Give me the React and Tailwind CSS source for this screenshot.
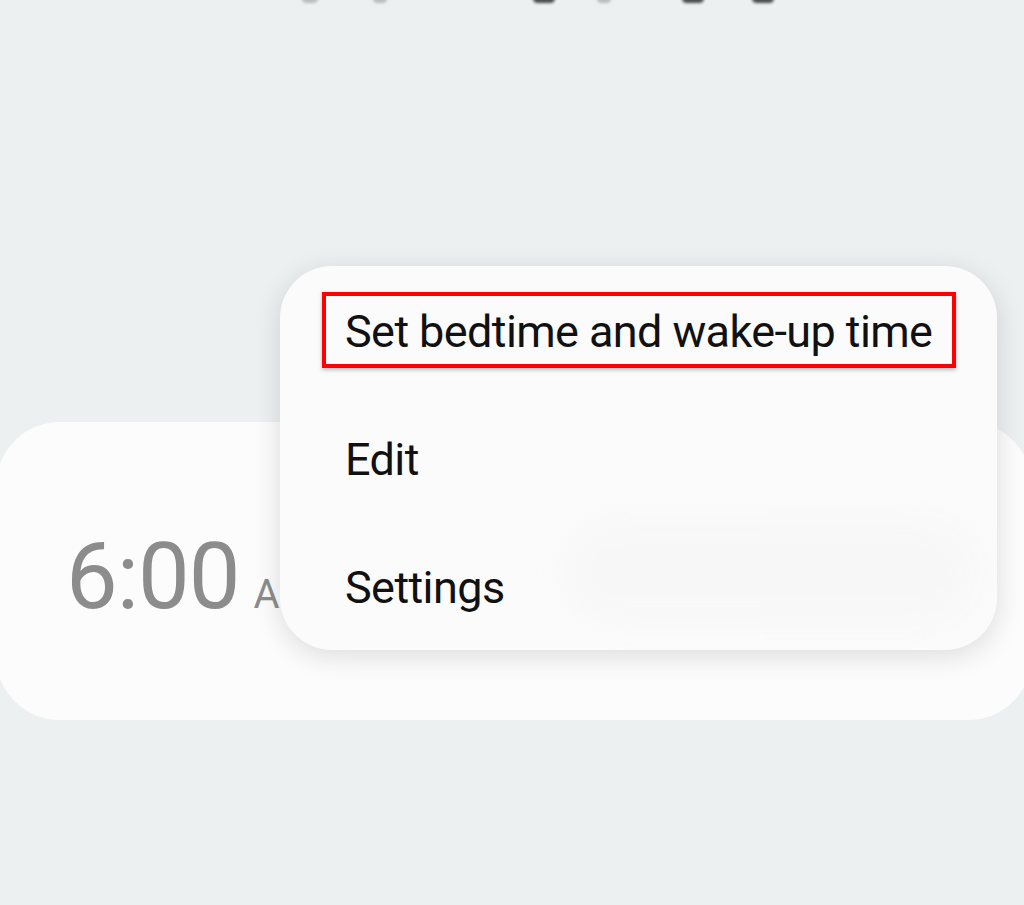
export default function App() {
  const blobs = [
    { x: 302, w: 16, o: 'opacity-25' },
    { x: 373, w: 14, o: 'opacity-25' },
    { x: 533, w: 22, o: 'opacity-80' },
    { x: 597, w: 14, o: 'opacity-25' },
    { x: 682, w: 22, o: 'opacity-80' },
    { x: 752, w: 22, o: 'opacity-80' },
  ];
  return (
    <div className="relative w-[1024px] h-[905px] overflow-hidden bg-[#ecf0f1]" style={{ fontFamily: 'Roboto, "Noto Sans", sans-serif' }}>
      {blobs.map((b, i) => (
        <div
          key={i}
          className={`absolute top-[-6px] h-[9px] rounded-full bg-[#222] blur-[1.5px] ${b.o}`}
          style={{ left: b.x, width: b.w }}
        />
      ))}
      <div className="pt-[422px]">
        <div className="ml-[-4px] w-[1036px] h-[298px] rounded-[64px] bg-[#fcfcfc] flex items-center pl-[70px]">
          <div className="flex items-baseline text-[#8c8c8c] mt-[12px]">
            <span className="text-[92px] leading-none tracking-[-1px]">6:00</span>
            <span className="text-[40px] leading-none ml-[14px]">AM</span>
          </div>
        </div>
      </div>
      <div className="absolute left-[280px] top-[266px] w-[717px] h-[384px] rounded-[52px] bg-[#fbfbfb] shadow-[0_6px_28px_rgba(0,0,0,0.13)] overflow-hidden">
        <div className="absolute left-[280px] top-[250px] w-[420px] h-[110px] rounded-full bg-[#f6f6f6] blur-[12px] opacity-60" />
        <div className="relative flex flex-col">
          <div className="h-[128px] flex items-center pl-[65px] pt-[4px] text-[45px] text-[#111] tracking-[-0.6px]">Set bedtime and wake-up time</div>
          <div className="h-[128px] flex items-center pl-[65px] pt-[4px] text-[45px] text-[#111] tracking-[-0.6px]">Edit</div>
          <div className="h-[128px] flex items-center pl-[65px] pt-[4px] text-[45px] text-[#111] tracking-[-0.6px]">Settings</div>
        </div>
        <div className="absolute left-[42px] top-[26px] w-[634px] h-[76px] border-[4px] border-[#ff0000] shadow-[0_2px_4px_rgba(0,0,0,0.25)]" />
      </div>
    </div>
  );
}
